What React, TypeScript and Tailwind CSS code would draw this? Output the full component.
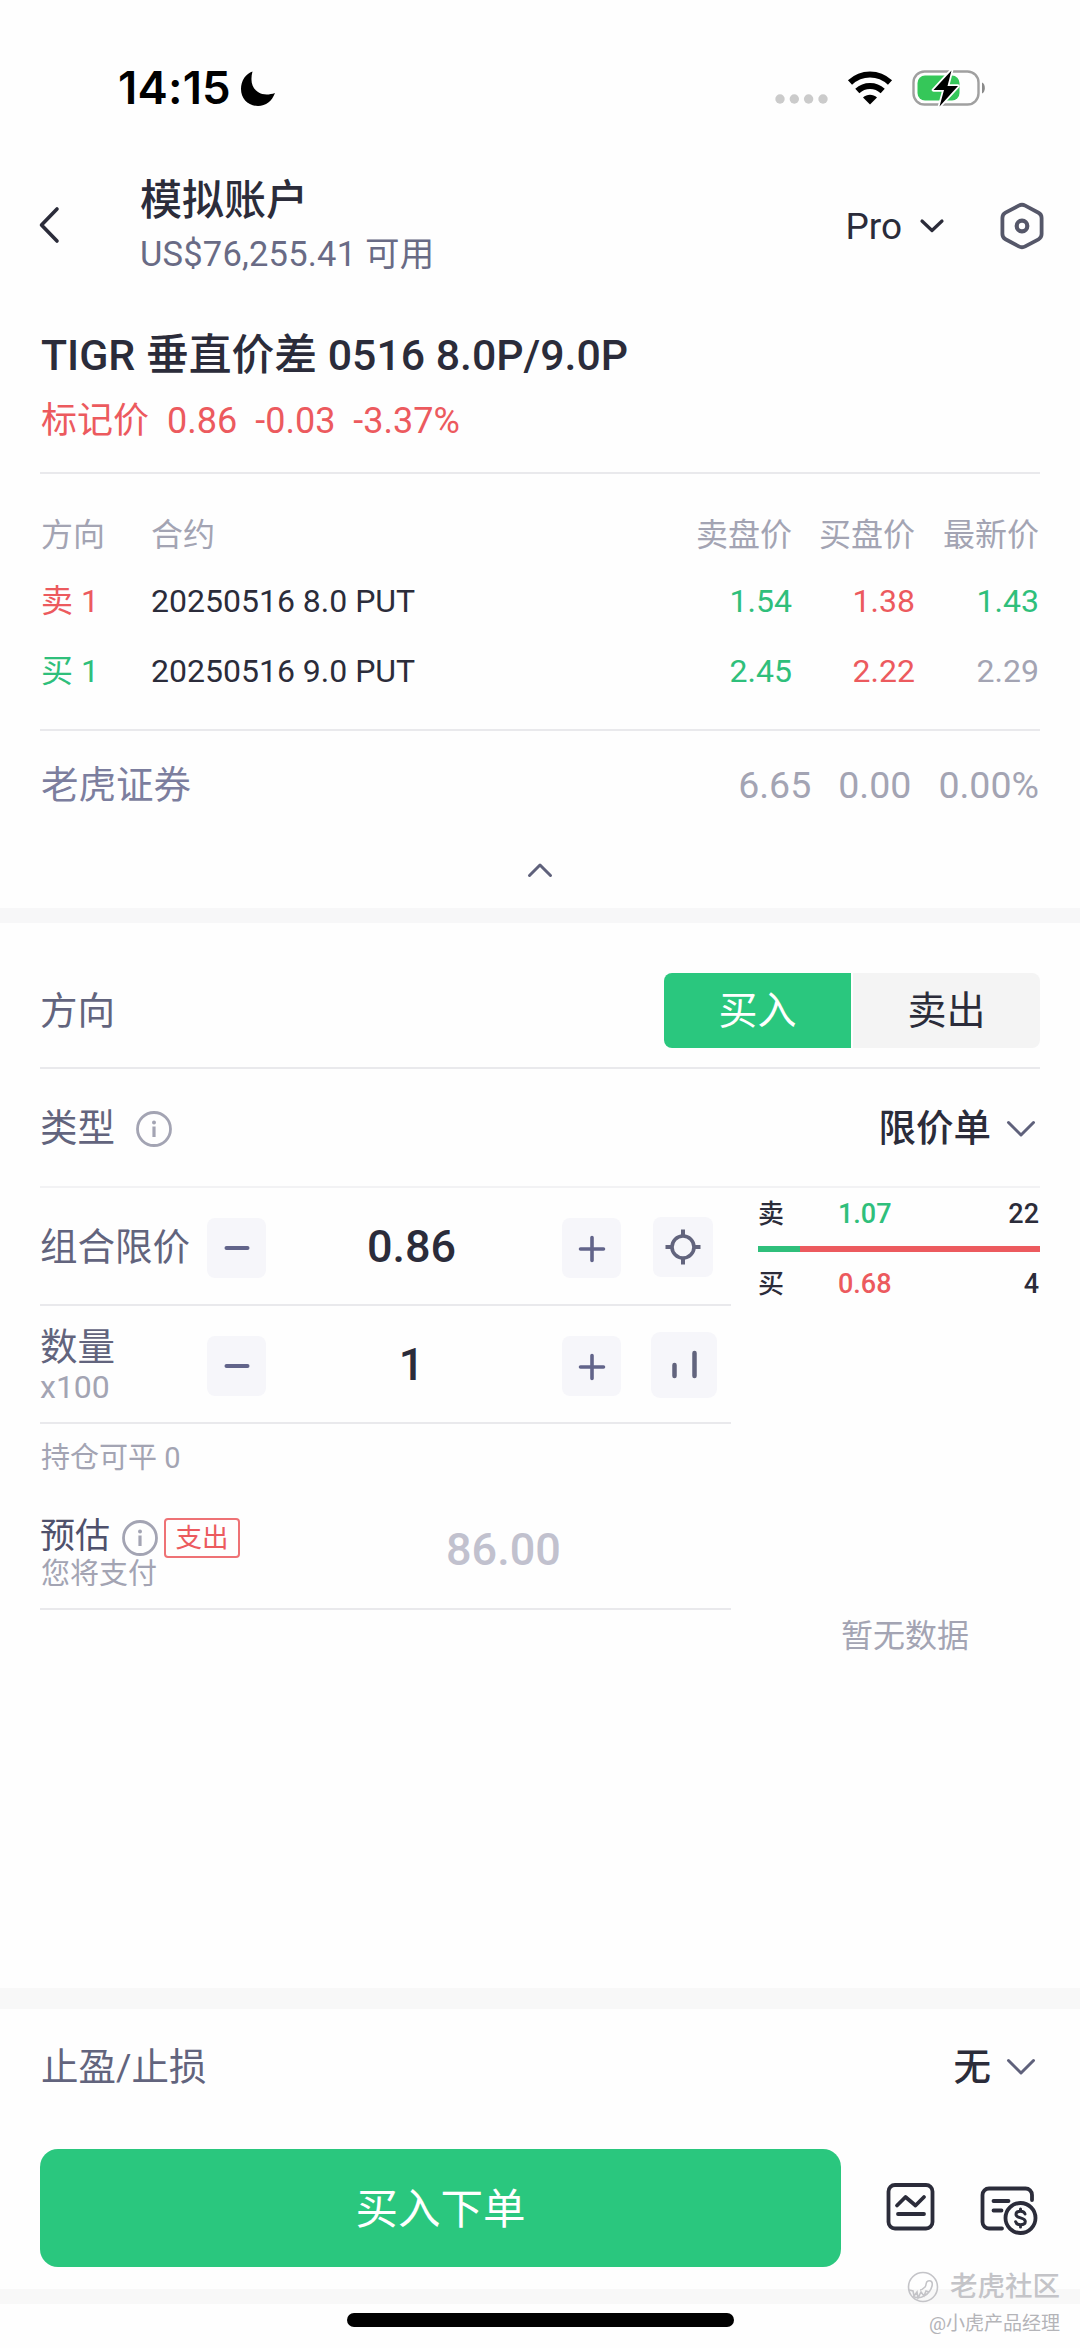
import React from 'react';
import { clsx } from 'clsx';

interface Leg {
  side: string;
  sideColor: string;
  contract: string;
  ask: string;
  bid: string;
  last: string;
  lastColor: string;
}

const legs: Leg[] = [
  {
    side: '卖 1',
    sideColor: 'text-[#ec5a5e]',
    contract: '20250516 8.0 PUT',
    ask: '1.54',
    bid: '1.38',
    last: '1.43',
    lastColor: 'text-[#2fbf7b]',
  },
  {
    side: '买 1',
    sideColor: 'text-[#2fbf7b]',
    contract: '20250516 9.0 PUT',
    ask: '2.45',
    bid: '2.22',
    last: '2.29',
    lastColor: 'text-[#a3a4b3]',
  },
];

function StatusBar() {
  return (
    <div className="flex h-[151px] items-start justify-between pt-[60px] pr-[94px] pl-[118px]">
      <div className="flex items-center gap-[9px] text-black">
        <span className="font-['Inter'] text-[45.5px] leading-[56px] font-semibold tracking-[0.2px]">14:15</span>
        <svg width="36" height="37" viewBox="0 0 36 37" fill="currentColor">
          <path d="M12.5 1.500C10 11 12 18 18 22c5 3.300 11 3 17 1C32 31 26 36 18 36 8 36 1 28.500 1 19 1 10.500 6 3.500 12.500 1.500Z" />
        </svg>
      </div>
      <div className="flex h-[56px] items-center">
        <svg width="54" height="10" viewBox="0 0 54 10" className="mt-[22px] mr-[18px]" fill="#cbcbcb">
          <circle cx="5" cy="5" r="4.700" />
          <circle cx="19.300" cy="5" r="4.700" />
          <circle cx="33.600" cy="5" r="4.700" />
          <circle cx="48" cy="5" r="4.700" />
        </svg>
        <svg width="46" height="34" viewBox="0 0 46 34" className="mr-[19px]">
          <path d="M3 11.500C14.500 .8 31.500 .8 43 11.500" stroke="#000" strokeWidth="6" fill="none" />
          <path d="M10.300 20C17.500 13.300 28.500 13.300 35.700 20" stroke="#000" strokeWidth="6" fill="none" />
          <path d="M16 26.500c4-3.700 10-3.700 14 0L23 33.500Z" fill="#000" />
        </svg>
        <svg width="74" height="38" viewBox="0 0 74 38">
          <rect x="1.500" y="2.500" width="65" height="33" rx="11" fill="none" stroke="#a0a0a0" strokeWidth="2.400" />
          <rect x="5.500" y="6.500" width="42" height="25" rx="7.500" fill="#35c759" />
          <path d="M70 13.500c3.800 1 3.800 10 0 11Z" fill="#8a8a8a" />
          <path
            d="M39.500 1.500 21.500 21h10.500l-4.500 16.500L46 17H35.500Z"
            fill="#000"
            stroke="#fff"
            strokeWidth="3.500"
            strokeLinejoin="round"
            paintOrder="stroke"
          />
        </svg>
      </div>
    </div>
  );
}

function ChevronDown({ className }: { className?: string }) {
  return (
    <svg width="30" height="18" viewBox="0 0 30 18" className={className} fill="none">
      <path d="M2.500 2.500 15 15 27.500 2.500" stroke="#5f617b" strokeWidth="3" strokeLinecap="round" strokeLinejoin="round" />
    </svg>
  );
}

function InfoIcon({ className }: { className?: string }) {
  return (
    <svg width="36" height="36" viewBox="0 0 36 36" className={className} fill="none">
      <circle cx="18" cy="18" r="16.500" stroke="#a3a4b3" strokeWidth="2.800" />
      <circle cx="18" cy="11.500" r="2" fill="#a3a4b3" />
      <path d="M18 15.500v10.500" stroke="#a3a4b3" strokeWidth="3.200" />
    </svg>
  );
}

function StepButton({ plus }: { plus?: boolean }) {
  return (
    <button className="mt-[4px] flex h-[60px] w-[59px] items-center justify-center rounded-[8px] bg-[#f6f6fa]">
      <svg width="30" height="30" viewBox="0 0 30 30" stroke="#62648a" strokeWidth="4" strokeLinecap="round">
        {plus ? <path d="M3.500 16h23M15 4.500v23" strokeWidth="3.600" /> : <path d="M4.500 15h21" />}
      </svg>
    </button>
  );
}

function AccountHeader() {
  return (
    <div className="flex h-[150px] items-center pr-[35px] pl-[38px]">
      <svg width="22" height="38" viewBox="0 0 22 38" className="mt-[-2px]" fill="none">
        <path d="M19 3 3.500 19 19 35" stroke="#2b2c3a" strokeWidth="3.600" strokeLinecap="round" strokeLinejoin="round" />
      </svg>
      <div className="ml-[80px] flex-1">
        <h1 className="text-[42px] leading-[56px] font-medium">模拟账户</h1>
        <p className="text-[34.5px] leading-[50px] tracking-[0.2px] text-[#696b85]">US$76,255.41 可用</p>
      </div>
      <span className="mt-[2px] text-[37px] leading-[44px]">Pro</span>
      <svg width="26" height="16" viewBox="0 0 26 16" className="mt-[-1px] ml-[17px]" fill="none">
        <path d="M3 3l10 9.500L23 3" stroke="#2b2c3a" strokeWidth="3.200" strokeLinecap="round" strokeLinejoin="round" />
      </svg>
      <svg width="46" height="48" viewBox="0 0 46 48" className="mt-[-1px] ml-[54px]" fill="none" stroke="#555769">
        <path
          d="M19.800 3.600a7 7 0 0 1 6.400 0l13.300 7.100a6 6 0 0 1 3.100 5.300v16a6 6 0 0 1-3.100 5.300l-13.300 7.100a7 7 0 0 1-6.400 0l-13.300-7.100A6 6 0 0 1 3.400 32V16a6 6 0 0 1 3.100-5.300Z"
          strokeWidth="3.800"
        />
        <circle cx="23" cy="24" r="5.300" strokeWidth="4.200" />
      </svg>
    </div>
  );
}

function SpreadQuote() {
  return (
    <section className="px-10">
      <div className="h-[173px] border-b-2 border-[#e9e9ec] pt-[24px]">
        <h2 className="pl-px text-[42.8px] leading-[60px] font-medium">TIGR 垂直价差 0516 8.0P/9.0P</h2>
        <div className="flex gap-[18px] pt-[10px] pl-px text-[36px] leading-[52px] text-[#ec5a5e]">
          <span>标记价</span>
          <span>0.86</span>
          <span>-0.03</span>
          <span>-3.37%</span>
        </div>
      </div>

      <div className="h-[257px] border-b-2 border-[#e9e9ec] pt-[33px] pr-px text-[32px]">
        <div className="mb-[3px] grid h-[56px] grid-cols-[111px_1fr_123px_123px_124px] items-center text-[#a3a4b3]">
          <span className="pl-px">方向</span>
          <span>合约</span>
          <span className="text-right">卖盘价</span>
          <span className="text-right">买盘价</span>
          <span className="text-right">最新价</span>
        </div>
        {legs.map((leg) => (
          <div key={leg.contract} className="grid h-[70px] grid-cols-[111px_1fr_123px_123px_124px] items-center">
            <span className={clsx('pl-px', leg.sideColor)}>{leg.side}</span>
            <span>{leg.contract}</span>
            <span className="text-right text-[#2fbf7b]">{leg.ask}</span>
            <span className="text-right text-[#ec5a5e]">{leg.bid}</span>
            <span className={clsx('text-right', leg.lastColor)}>{leg.last}</span>
          </div>
        ))}
      </div>

      <div className="flex h-[106px] items-center gap-[27px] pt-[2px] pr-px pl-px text-[37.5px] text-[#a3a4b3]">
        <span className="flex-1 text-[#7c7e9e]">老虎证券</span>
        <span>6.65</span>
        <span>0.00</span>
        <span>0.00%</span>
      </div>
      <div className="flex h-[71px] justify-center pt-[24px]">
        <svg width="28" height="18" viewBox="0 0 28 18" fill="none">
          <path d="M3.500 14.500 14 4l10.500 10.500" stroke="#5f617b" strokeWidth="3" strokeLinecap="round" strokeLinejoin="round" />
        </svg>
      </div>
    </section>
  );
}

function OrderBook() {
  return (
    <div className="flex flex-1 flex-col text-[27px] font-medium text-[#2b2c3a]">
      <div className="grid h-[58px] grid-cols-[80px_1fr_auto] items-center pr-px pb-[5px]">
        <span className="text-[26px]">卖</span>
        <span className="text-[#2fbf7b]">1.07</span>
        <span>22</span>
      </div>
      <div className="flex h-[6px]">
        <div className="w-[42px] bg-[#2fbf7b]" />
        <div className="flex-1 bg-[#ec5a5e]" />
      </div>
      <div className="grid h-[66px] grid-cols-[80px_1fr_auto] items-center pr-px pb-[2px]">
        <span className="text-[26px]">买</span>
        <span className="text-[#ec5a5e]">0.68</span>
        <span>4</span>
      </div>
      <p className="mt-[294px] pl-[12px] text-center text-[32px] leading-[48px] font-normal text-[#a3a4b3]">暂无数据</p>
    </div>
  );
}

function OrderForm() {
  return (
    <section className="h-[1065px] px-10 text-[37.5px] text-[#62647d]">
      <div className="flex h-[146px] items-center justify-between border-b-2 border-[#e9e9ec] pt-[30px]">
        <span className="mt-[2px]">方向</span>
        <div className="flex h-[75px] w-[376px] gap-[2px] overflow-hidden rounded-[8px] text-[39px]">
          <button className="flex-1 bg-[#2ac77e] pt-[2px] text-white">买入</button>
          <button className="flex-1 bg-[#f4f4f4] pt-[2px] text-[#2b2c3a]">卖出</button>
        </div>
      </div>

      <div className="flex h-[119px] items-center border-b-2 border-[#f2f2f4] pt-[2px]">
        <span>类型</span>
        <InfoIcon className="ml-[21px]" />
        <span className="ml-auto text-[37.5px] font-medium text-[#2b2c3a]">限价单</span>
        <ChevronDown className="mr-[4px] ml-[15px]" />
      </div>

      <div className="flex gap-[27px]">
        <div className="w-[691px]">
          <div className="flex h-[118px] items-center border-b-2 border-[#e9e9ec]">
            <span className="mt-[3px] w-[167px]">组合限价</span>
            <StepButton />
            <span className="mt-px flex-1 pr-[5px] text-center text-[45px] font-medium text-[#2b2c3a]">0.86</span>
            <StepButton plus />
            <button className="mt-[2px] mr-[18px] ml-[32px] flex size-[60px] items-center justify-center rounded-[8px] bg-[#f6f6fa]">
              <svg width="36" height="36" viewBox="0 0 36 36" fill="none" stroke="#62647d" strokeWidth="4">
                <circle cx="18" cy="18" r="11" strokeWidth="3.600" />
                <path d="M18 .5v6M18 29.500v6M.5 18h6M29.500 18h6" />
              </svg>
            </button>
          </div>

          <div className="flex h-[118px] items-center border-b-2 border-[#e9e9ec]">
            <div className="mt-[3px] w-[167px]">
              <p className="leading-[43px]">数量</p>
              <p className="text-[32px] leading-[36px] text-[#a3a4b3]">x100</p>
            </div>
            <StepButton />
            <span className="mt-px flex-1 pr-[5px] text-center text-[45px] font-medium text-[#2b2c3a]">1</span>
            <StepButton plus />
            <button className="mt-[2px] mr-[14px] ml-[30px] flex size-[66px] items-center justify-center rounded-[9px] bg-[#f6f6fa]">
              <svg width="30" height="30" viewBox="0 0 30 30" stroke="#62647d" strokeWidth="4.500" strokeLinecap="round">
                <path d="M5.500 15v11M25.500 3v23" />
              </svg>
            </button>
          </div>

          <p className="pt-[13px] pl-px text-[29px] leading-[43px] text-[#a3a4b3]">持仓可平 0</p>

          <div className="flex h-[130px] items-center border-b-2 border-[#e9e9ec] pt-[12px]">
            <div className="w-[400px] pt-[7px]">
              <div className="flex h-[40px] items-center">
                <span className="text-[35px] text-[#4f516c]">预估</span>
                <InfoIcon className="ml-[12px]" />
                <span className="ml-[6px] flex h-[40px] w-[76px] items-center justify-center rounded-[4px] border-2 border-[#ee7275] text-[26.5px] text-[#ec5a5e]">
                  支出
                </span>
              </div>
              <p className="pl-px text-[29px] leading-[32px] text-[#a3a4b3]">您将支付</p>
            </div>
            <span className="ml-[6px] text-[45px] font-medium text-[#c1c1ce]">86.00</span>
          </div>
        </div>

        <OrderBook />
      </div>
    </section>
  );
}

function ActionBar() {
  return (
    <div className="flex h-[140px] items-start pl-10 text-[#2b2c3a]">
      <button className="h-[118px] w-[801px] rounded-[18px] bg-[#2ac77e] pt-[3px] text-[42.5px] text-white">买入下单</button>
      <svg width="50" height="50" viewBox="0 0 50 50" className="mt-[33px] ml-[44px]" fill="none" stroke="currentColor" strokeWidth="3.800" strokeLinecap="round" strokeLinejoin="round">
        <rect x="3.500" y="3" width="44" height="43.500" rx="6.500" />
        <path d="M12 23.500l8.500-8.500 10 8.500 8.500-8.500M13 32h26" />
      </svg>
      <svg width="60" height="52" viewBox="0 0 60 52" className="mt-[36px] ml-[44px]" fill="none" stroke="currentColor" strokeWidth="3.800" strokeLinecap="round" strokeLinejoin="round">
        <path d="M53 15V10a6.500 6.500 0 0 0-6.500-6.500H10A6.500 6.500 0 0 0 3.500 10v27a6.500 6.500 0 0 0 6.500 6.500h13" />
        <path d="M14.500 16h15M14.500 25.500h8" />
        <circle cx="41.500" cy="33" r="15" />
        <path
          d="M46 29c-.5-2-2.200-2.700-4.500-2.700-2.600 0-4.500 1.200-4.500 3.200 0 4.500 9.300 2.300 9.300 7 0 2-2 3.200-4.800 3.200-2.500 0-4.400-.9-4.900-3M41.500 24v2M41.500 40v2"
          strokeWidth="3"
        />
      </svg>
    </div>
  );
}

// Sits over the footer, bottom right corner
function Watermark() {
  return (
    <div className="absolute right-[20px] bottom-[7px] flex flex-col items-end text-[#c4c4c8]">
      <div className="flex items-center gap-[11px]">
        <svg width="32" height="32" viewBox="0 0 32 32" fill="none" stroke="currentColor" strokeWidth="1.600">
          <circle cx="16" cy="16" r="14.500" />
          <path d="M2 19l4 1 1 5 3-4 1 6 3-6 3 4 2-5 3 1M6 25c7 5 17-2 19-10 1-4-1-6-4-5s-1 4-3 6-3 3-5 3" />
        </svg>
        <span className="text-[27.5px] leading-[38px] font-medium">老虎社区</span>
      </div>
      <span className="text-[19px] leading-[35px] text-[#b4b4b8]">@小虎产品经理</span>
    </div>
  );
}

export default function App() {
  return (
    <div className="relative flex h-[2348px] w-[1080px] flex-col overflow-hidden bg-[#fefefe] font-['Roboto','Noto_Sans_CJK_SC',sans-serif] text-[#2b2c3a]">
      <StatusBar />
      <AccountHeader />
      <SpreadQuote />
      <div className="h-[15px] bg-[#f7f7f8]" />
      <OrderForm />
      <div className="h-[21px] bg-[#f8f8f8]" />
      <div className="flex h-[140px] items-center px-10 pb-[24px] text-[37.5px]">
        <span className="pl-px text-[#62647d]">止盈/止损</span>
        <span className="ml-auto font-medium">无</span>
        <ChevronDown className="mr-[4px] ml-[15px]" />
      </div>
      <ActionBar />
      <div className="h-[15px] bg-[#f8f8f8]" />
      <div className="mx-auto mt-[9px] h-[14px] w-[387px] rounded-full bg-black" />
      <Watermark />
    </div>
  );
}
